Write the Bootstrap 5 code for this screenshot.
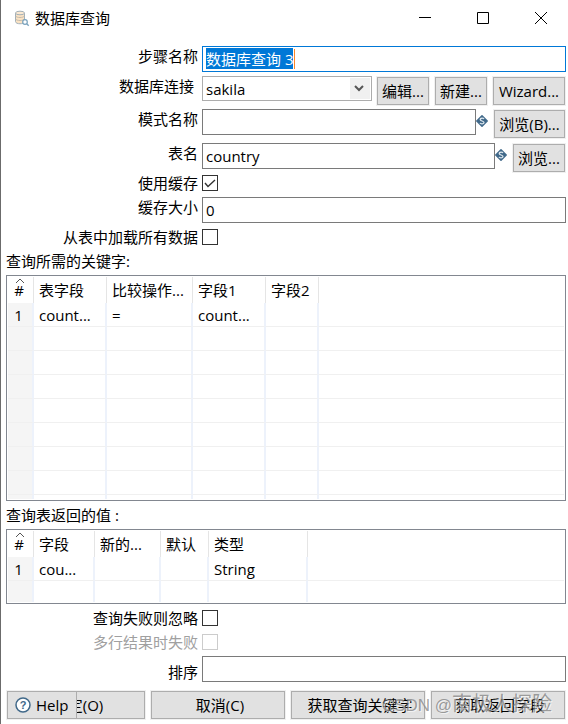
<!DOCTYPE html>
<html lang="zh-CN">
<head>
<meta charset="utf-8">
<meta name="viewport" content="width=device-width, initial-scale=1">
<title>数据库查询</title>
<link href="https://cdn.jsdelivr.net/npm/bootstrap@5.3.0/dist/css/bootstrap.min.css" rel="stylesheet">
<style>
body { font-family: "Open Sans", "Noto Sans CJK SC", sans-serif; font-size: 15px; line-height: 22px; color: #000; background: #fff; }
.dialog { border-left: 1px solid #6b6b6b; padding: 0 2px 4px 5px; min-height: 100vh; }
.titlebar { height: 36px; padding-left: 8px; margin-bottom: 10px; }
.win-btn { width: 58px; height: 36px; padding: 0; border: 0; background: none; display: flex; align-items: center; justify-content: center; }
.win-btn:last-child { width: 54px; padding-left: 4px; }
.line { display: flex; align-items: flex-start; gap: 4px; }
.line > label { width: 192px; flex: none; text-align: right; white-space: nowrap; line-height: 20px; }
.line .form-control, .line .form-select { height: 26px; padding: 0 3px; font-size: 15px; line-height: 20px; border: 1px solid #7a7a7a; border-radius: 0; color: #000; background-color: #fff; box-shadow: none; min-width: 0; width: auto; flex: 1 1 0; }
.line .form-control:focus { border-color: #0078d7; }
.line .form-control::selection { background: #0078d7; color: #fff; }
.line .form-select { height: 25px; border-color: #adadad; background-position: right 1px center; background-size: 20px 21px; background-image: url("data:image/svg+xml,%3Csvg xmlns='http://www.w3.org/2000/svg' viewBox='0 0 20 21'%3E%3Cpath fill='%23f0f0f0' d='M0 0h20v21H0z'/%3E%3Cpath fill='none' stroke='%23555' stroke-width='2' d='M5 8l4 4 4-4'/%3E%3C/svg%3E"); }
.name-wrap { display: flex; flex: 1; position: relative; }
.line .name-wrap .form-control { padding-bottom: 2px; }
.text-caret { position: absolute; left: 92px; top: 3px; width: 1px; height: 20px; background: #ff8728; }
.win-control { height: 28px; margin: 1px; padding: 0; border: 1px solid #adadad; border-radius: 0; background: #e1e1e1; box-shadow: 0 0 0 1px #f0f0f0; color: #000; font-size: 15px; line-height: 24px; white-space: nowrap; }
.win-control:hover { background: #e5f1fb; border-color: #0078d7; color: #000; }
.size-s { width: 52px; }
.size-b { width: 71px; }
.size-m { width: 72px; }
.var-icon { width: 12px; height: 12px; margin: 6px 1px 0 -4px; flex: none; }
.line.check-line > label { line-height: 16px; }
.line .form-check-input { width: 16px; height: 16px; margin: 0; border: 1px solid #333; border-radius: 0; background-color: #fff; box-shadow: none; }
.line .form-check-input:checked { background-size: 14px 14px; background-image: url("data:image/svg+xml,%3Csvg xmlns='http://www.w3.org/2000/svg' viewBox='0 0 14 14'%3E%3Cpath fill='none' stroke='%23333' stroke-width='1.4' d='M2 7l3 3.5L12 4'/%3E%3C/svg%3E"); }
.line .form-check-input:disabled { border-color: #ccc; opacity: 1; }
.disabled-text { color: #a0a0a0; }
.grid-box { border: 1px solid #828790; padding: 1px; overflow: hidden; }
.data-grid { width: 100%; table-layout: fixed; border-collapse: separate; border-spacing: 0; }
.data-grid th, .data-grid td { padding: 0 0 0 5px; font-weight: 400; line-height: 22px; white-space: nowrap; overflow: hidden; }
.data-grid th { height: 26px; border-right: 1px solid #e5e5e5; position: relative; }
.data-grid td { height: 24px; border-right: 2px solid #edf2fb; border-bottom: 1px solid #f0f0f0; }
.data-grid th:last-child, .data-grid td:last-child { border-right: 0; }
.data-grid th:first-child, .data-grid td:first-child { padding: 0 3px 0 0; text-align: center; }
.data-grid td:first-child { background: #f5f5f5; }
.data-grid .cut td { height: 4px; border-bottom: 0; }
.data-grid .cut-tall td { height: 21px; border-bottom: 0; }
.sort-mark { position: absolute; left: 7px; top: 1px; width: 10px; height: 6px; }
.w26 { width: 26px; } .w48 { width: 48px; } .w53 { width: 53px; } .w61 { width: 61px; } .w66 { width: 66px; }
.w73 { width: 73px; } .w86 { width: 86px; } .w99 { width: 99px; }
.actions { position: relative; gap: 4px; }
.actions .main-btn { flex: 1 1 0; padding-left: 4px; }
.actions .first-btn { flex-basis: 10px; }
.help-btn { position: absolute; left: 0; top: 0; width: 70px; box-shadow: none; display: flex; align-items: center; padding-left: 7px; gap: 5px; }
.watermark { position: absolute; right: 14px; top: 1px; color: rgba(110,110,110,.65); text-shadow: 1px 1px 0 rgba(255,255,255,.6); pointer-events: none; font: 17px/26px "Liberation Sans", "Noto Sans CJK SC", sans-serif; white-space: nowrap; }
.watermark span { font-size: 20px; }
.gap2 { margin-top: 2px; } .gap3 { margin-top: 3px; } .gap4 { margin-top: 4px; } .gap5 { margin-top: 5px; } .gap6 { margin-top: 6px; } .gap8 { margin-top: 8px; }
</style>
<script src="https://cdn.jsdelivr.net/npm/bootstrap@5.3.0/dist/js/bootstrap.bundle.min.js"></script>
</head>
<body>
<main class="dialog">
  <header class="titlebar d-flex align-items-center">
    <svg class="me-1" width="17" height="18" viewBox="0 0 17 18" aria-hidden="true">
      <path d="M1.500 4v8.500c0 3 9 3 9 0V4" fill="#fbe3c4" stroke="#a3b0b8"/>
      <ellipse cx="6" cy="4" rx="4.500" ry="1.800" fill="#fbe9d2" stroke="#a3b0b8"/>
      <path d="M1.500 7c1 2 8 2 9 0M1.500 10c1 2 8 2 9 0" fill="none" stroke="#c4bcae"/>
      <circle cx="11" cy="13" r="2.300" fill="#fff" stroke="#7ba3bd" stroke-width="1.200"/>
      <path d="M12.700 14.700l2 2" stroke="#7ba3bd" stroke-width="1.300"/>
    </svg>
    <span>数据库查询</span>
    <div class="d-flex ms-auto">
      <button class="win-btn" type="button" aria-label="最小化"><svg width="12" height="12" viewBox="0 0 12 12"><path d="M0 5.500h12" stroke="#000"/></svg></button>
      <button class="win-btn" type="button" aria-label="最大化"><svg width="12" height="12" viewBox="0 0 12 12"><path d="M.5.5h11v11H.5z" fill="none" stroke="#000"/></svg></button>
      <button class="win-btn" type="button" aria-label="关闭"><svg width="12" height="12" viewBox="0 0 12 12"><path d="M0 0l12 12M12 0L0 12" stroke="#000"/></svg></button>
    </div>
  </header>

  <div class="line">
    <label for="stepName">步骤名称</label>
    <div class="name-wrap"><input class="form-control" id="stepName" type="text" value="数据库查询 3" autofocus><span class="text-caret"></span></div>
  </div>
  <div class="line gap4">
    <label class="pe-1" for="conn">数据库连接</label>
    <select class="form-select" id="conn"><option>sakila</option></select>
    <button class="btn win-control size-s" type="button">编辑...</button>
    <button class="btn win-control size-s" type="button">新建...</button>
    <button class="btn win-control size-m" type="button">Wizard...</button>
  </div>
  <div class="line gap3">
    <label for="schema">模式名称</label>
    <input class="form-control" id="schema" type="text">
    <svg class="var-icon" viewBox="0 0 12 12" aria-hidden="true"><path d="M6 .8L11.200 6 6 11.200.8 6z" fill="#41698a" stroke="#41698a" stroke-width="1.500" stroke-linejoin="round"/><path d="M8 4C7.300 2.900 4.200 2.900 4.200 4.500S8 5.900 8 7.500 4.700 9.200 4 8" fill="none" stroke="#dce6ed" stroke-width="1.300"/></svg>
    <button class="btn win-control size-b" type="button">浏览(B)...</button>
  </div>
  <div class="line gap4">
    <label for="tableName">表名</label>
    <input class="form-control" id="tableName" type="text" value="country">
    <svg class="var-icon" viewBox="0 0 12 12" aria-hidden="true"><path d="M6 .8L11.200 6 6 11.200.8 6z" fill="#41698a" stroke="#41698a" stroke-width="1.500" stroke-linejoin="round"/><path d="M8 4C7.300 2.900 4.200 2.900 4.200 4.500S8 5.900 8 7.500 4.700 9.200 4 8" fill="none" stroke="#dce6ed" stroke-width="1.300"/></svg>
    <button class="btn win-control size-s" type="button">浏览...</button>
  </div>
  <div class="line check-line gap2">
    <label for="useCache">使用缓存</label>
    <input class="form-check-input" id="useCache" type="checkbox" checked>
  </div>
  <div class="line gap6">
    <label for="cacheSize">缓存大小</label>
    <input class="form-control" id="cacheSize" type="text" value="0">
  </div>
  <div class="line check-line gap6">
    <label for="loadAll">从表中加载所有数据</label>
    <input class="form-check-input" id="loadAll" type="checkbox">
  </div>

  <div class="gap5" id="keysTitle">查询所需的关键字:</div>
  <div class="grid-box gap3">
    <table class="data-grid" aria-labelledby="keysTitle">
      <thead><tr><th class="w26"><svg class="sort-mark" viewBox="0 0 10 6"><path d="M1 5l4-4 4 4" fill="none" stroke="#555"/></svg>#</th><th class="w73">表字段</th><th class="w86">比较操作...</th><th class="w73">字段1</th><th class="w53">字段2</th><th></th></tr></thead>
      <tbody>
        <tr><td>1</td><td>count...</td><td>=</td><td>count...</td><td></td><td></td></tr>
        <tr><td></td><td></td><td></td><td></td><td></td><td></td></tr>
        <tr><td></td><td></td><td></td><td></td><td></td><td></td></tr>
        <tr><td></td><td></td><td></td><td></td><td></td><td></td></tr>
        <tr><td></td><td></td><td></td><td></td><td></td><td></td></tr>
        <tr><td></td><td></td><td></td><td></td><td></td><td></td></tr>
        <tr><td></td><td></td><td></td><td></td><td></td><td></td></tr>
        <tr><td></td><td></td><td></td><td></td><td></td><td></td></tr>
        <tr class="cut"><td></td><td></td><td></td><td></td><td></td><td></td></tr>
      </tbody>
    </table>
  </div>

  <div class="gap3" id="valuesTitle">查询表返回的值 :</div>
  <div class="grid-box gap3">
    <table class="data-grid" aria-labelledby="valuesTitle">
      <thead><tr><th class="w26"><svg class="sort-mark" viewBox="0 0 10 6"><path d="M1 5l4-4 4 4" fill="none" stroke="#555"/></svg>#</th><th class="w61">字段</th><th class="w66">新的...</th><th class="w48">默认</th><th class="w99">类型</th><th></th></tr></thead>
      <tbody>
        <tr><td>1</td><td>cou...</td><td></td><td></td><td>String</td><td></td></tr>
        <tr class="cut-tall"><td></td><td></td><td></td><td></td><td></td><td></td></tr>
      </tbody>
    </table>
  </div>

  <div class="line check-line gap6">
    <label for="ignoreFail">查询失败则忽略</label>
    <input class="form-check-input" id="ignoreFail" type="checkbox">
  </div>
  <div class="line check-line gap8">
    <label class="disabled-text" for="multiFail">多行结果时失败</label>
    <input class="form-check-input" id="multiFail" type="checkbox" disabled>
  </div>
  <div class="line align-items-end gap6">
    <label for="orderBy">排序</label>
    <input class="form-control" id="orderBy" type="text">
  </div>

  <footer class="actions d-flex gap8">
    <button class="btn win-control main-btn first-btn" type="button">确定(O)</button>
    <button class="btn win-control main-btn" type="button">取消(C)</button>
    <button class="btn win-control main-btn" type="button">获取查询关键字</button>
    <button class="btn win-control main-btn" type="button">获取返回字段</button>
    <button class="btn win-control help-btn" type="button"><svg width="16" height="16" viewBox="0 0 16 16" aria-hidden="true"><circle cx="8" cy="8" r="7" fill="#fff" stroke="#41698a" stroke-width="1.500"/><text x="8" y="12" text-anchor="middle" font-family="Liberation Sans, sans-serif" font-size="11" font-weight="700" fill="#41698a">?</text></svg>Help</button>
    <div class="watermark">CSDN @<span>南极人探险</span></div>
  </footer>
</main>
<script>
  const stepName = document.getElementById('stepName');
  stepName.focus();
  stepName.select();
</script>
</body>
</html>
